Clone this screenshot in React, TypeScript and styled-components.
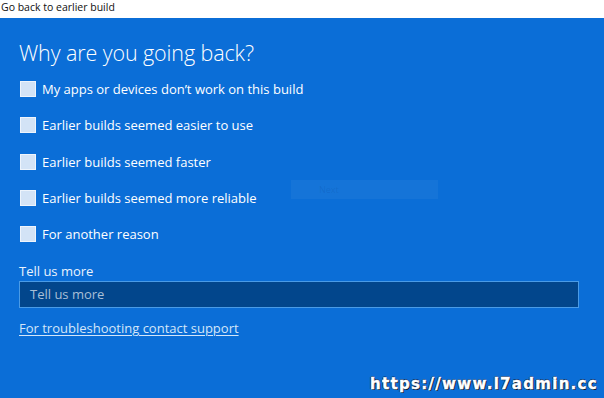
import React from "react";
import styled, { createGlobalStyle } from "styled-components";

const Global = createGlobalStyle`
  html, body { margin: 0; padding: 0; background: #ffffff; }
  body { width: 604px; height: 398px; overflow: hidden; font-family: "Open Sans", "Noto Sans", sans-serif; }
`;

const Frame = styled.div`
  width: 604px;
  height: 398px;
  display: flex;
  flex-direction: column;
  position: relative;
`;

const TitleBar = styled.div`
  height: 18px;
  flex: 0 0 18px;
  background: #ffffff;
  color: #111111;
  font-family: "Open Sans", "Noto Sans", sans-serif;
  font-size: 10.5px;
  line-height: 15px;
  padding-left: 1px;
  white-space: nowrap;
`;

const Panel = styled.div`
  flex: 1;
  background: #0b6ed7;
  padding: 20px 25px 0 19px;
  display: flex;
  flex-direction: column;
  position: relative;
`;

const Heading = styled.h1`
  margin: 0 0 11px 0;
  font-family: "Open Sans", "Noto Sans", sans-serif;
  font-weight: 300;
  font-size: 21.5px;
  line-height: 30px;
  color: #ffffff;
  letter-spacing: -0.1px;
`;

const List = styled.div`
  display: flex;
  flex-direction: column;
  gap: 16.3px;
  margin-left: 1px;
`;

const Row = styled.label`
  display: flex;
  align-items: center;
  gap: 6px;
  height: 20px;
  color: #ffffff;
  font-size: 13px;
  font-family: "Open Sans", "Noto Sans", sans-serif;
`;

const Box = styled.span`
  width: 16px;
  height: 16px;
  box-sizing: border-box;
  background: #d3e3f6;
  border: 1px solid #eef4fc;
`;

const Label = styled.div`
  margin-top: 18.5px;
  color: #eaf3fd;
  font-size: 13px;
  line-height: 17px;
`;

const Input = styled.div`
  margin-top: 1px;
  height: 27px;
  box-sizing: border-box;
  background: #02468c;
  border: 1px solid #4a9be6;
  color: #a9bfd6;
  font-size: 13px;
  line-height: 25px;
  padding-left: 10px;
`;

const Link = styled.a`
  margin-top: 11px;
  color: #d4e6f9;
  font-size: 13px;
  line-height: 18px;
  text-decoration: underline;
  text-underline-offset: 2px;
  text-decoration-thickness: 1px;
  align-self: flex-start;
`;

const Ghost = styled.div`
  position: absolute;
  left: 291px;
  top: 162px;
  width: 147px;
  height: 19px;
  background: rgba(255, 255, 255, 0.045);
  color: rgba(0, 40, 110, 0.12);
  font-size: 9px;
  line-height: 19px;
  padding-left: 28px;
  box-sizing: border-box;
`;

const Watermark = styled.div`
  position: absolute;
  right: 6px;
  bottom: 5px;
  font-family: "DejaVu Sans", sans-serif;
  font-weight: 700;
  font-size: 15px;
  letter-spacing: 1.3px;
  color: #ffffff;
  -webkit-text-stroke: 0.4px #ffffff;
  text-shadow: 1px 1px 0 #0a1a30, -1px 0 0 #06306a, 0 -1px 0 #06306a;
  white-space: nowrap;
`;

const reasons = [
  "My apps or devices don\u2019t work on this build",
  "Earlier builds seemed easier to use",
  "Earlier builds seemed faster",
  "Earlier builds seemed more reliable",
  "For another reason",
];

export default function App() {
  return (
    <>
      <Global />
      <Frame>
        <TitleBar>Go back to earlier build</TitleBar>
        <Panel>
          <Heading>Why are you going back?</Heading>
          <List>
            {reasons.map((r) => (
              <Row key={r}>
                <Box />
                {r}
              </Row>
            ))}
          </List>
          <Label>Tell us more</Label>
          <Input>Tell us more</Input>
          <Link>For troubleshooting contact support</Link>
          <Ghost>Next</Ghost>
          <Watermark>https://www.l7admin.cc</Watermark>
        </Panel>
      </Frame>
    </>
  );
}
